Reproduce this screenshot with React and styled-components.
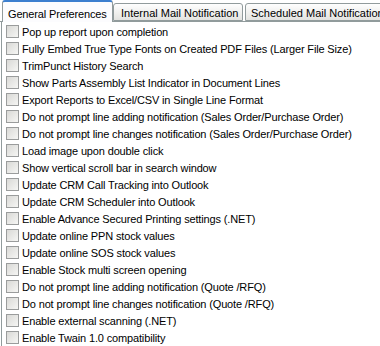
import React from 'react'
import styled, { createGlobalStyle } from 'styled-components'

const Global = createGlobalStyle`
  html, body { margin: 0; padding: 0; background: #fff; }
  body { font-family: "Liberation Sans", Arial, sans-serif; font-size: 11px; color: #000; }
`

const Window = styled.div`
  width: 380px;
  height: 346px;
  overflow: hidden;
  background: #fff;
`

const TabStrip = styled.div`
  display: flex;
  align-items: flex-end;
  height: 21px;
  padding-left: 2px;
  border-bottom: 1px solid #919b9c;
  white-space: nowrap;
  background: #fff;
`

const Tab = styled.div`
  flex: none;
  box-sizing: border-box;
  height: ${p => (p.active ? '22px' : '18px')};
  width: ${p => p.w}px;
  margin-right: ${p => (p.active ? '0' : '2px')};
  margin-bottom: ${p => (p.active ? '-1px' : '0')};
  padding-left: ${p => p.pad}px;
  padding-top: ${p => (p.active ? '3px' : '1px')};
  display: flex;
  align-items: center;
  font-size: 11px;
  letter-spacing: ${p => (p.active ? '-0.15px' : '0')};
  color: #000;
  border: 1px solid #919b9c;
  border-bottom: ${p => (p.active ? 'none' : '1px solid #919b9c')};
  border-top: ${p => (p.active ? '2px solid #3c7fcf' : '1px solid #919b9c')};
  border-radius: 3px 3px 0 0;
  background: ${p => (p.active ? '#fcfcfe' : 'linear-gradient(#fefefe, #f0f0ee 55%, #e3e3e0)')};
`

const Panel = styled.div`
  border-left: 1px solid #919b9c;
  margin-left: 1px;
  padding: 1px 0 0 4px;
  display: flex;
  flex-direction: column;
  height: 340px;
  box-sizing: border-box;
`

const Row = styled.label`
  display: flex;
  align-items: center;
  height: 17px;
  flex: none;
  white-space: nowrap;
  font-size: 11px;
  letter-spacing: -0.15px;
`

const Box = styled.span`
  flex: none;
  width: 13px;
  height: 13px;
  box-sizing: border-box;
  border: 1px solid #9a9c9c;
  background: linear-gradient(135deg, #d9d9d6, #f6f6f4);
  margin-right: 3px;
`

const items = [
  'Pop up report upon completion',
  'Fully Embed True Type Fonts on Created PDF Files (Larger File Size)',
  'TrimPunct History Search',
  'Show Parts Assembly List Indicator in Document Lines',
  'Export Reports to Excel/CSV in Single Line Format',
  'Do not prompt line adding notification (Sales Order/Purchase Order)',
  'Do not prompt line changes notification (Sales Order/Purchase Order)',
  'Load image upon double click',
  'Show vertical scroll bar in search window',
  'Update CRM Call Tracking into Outlook',
  'Update CRM Scheduler into Outlook',
  'Enable Advance Secured Printing settings (.NET)',
  'Update online PPN stock values',
  'Update online SOS stock values',
  'Enable Stock multi screen opening',
  'Do not prompt line adding notification (Quote /RFQ)',
  'Do not prompt line changes notification (Quote /RFQ)',
  'Enable external scanning (.NET)',
  'Enable Twain 1.0 compatibility',
]

export default function App() {
  return (
    <Window>
      <Global />
      <TabStrip>
        <Tab active w={111} pad={5}>General Preferences</Tab>
        <Tab w={130} pad={7}>Internal Mail Notification</Tab>
        <Tab w={150} pad={5}>Scheduled Mail Notification</Tab>
      </TabStrip>
      <Panel>
        {items.map(t => (
          <Row key={t}>
            <Box />
            {t}
          </Row>
        ))}
      </Panel>
    </Window>
  )
}
